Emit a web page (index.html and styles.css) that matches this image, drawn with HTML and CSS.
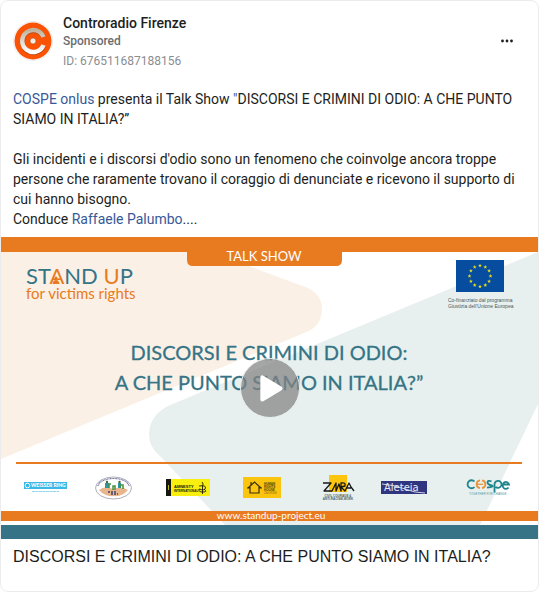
FILE: index.html
```html
<!DOCTYPE html>
<html lang="it">
<head>
<meta charset="utf-8">
<meta name="viewport" content="width=device-width, initial-scale=1">
<title>Controradio Firenze</title>
<link rel="stylesheet" href="styles.css">
</head>
<body>
<article class="card">
  <header class="head">
    <svg class="avatar" viewBox="0 0 40 40" aria-hidden="true">
      <defs>
        <linearGradient id="silver" x1="0" y1="0" x2="0" y2="1">
          <stop offset="0" stop-color="#c0b29c"/>
          <stop offset="1" stop-color="#fff"/>
        </linearGradient>
      </defs>
      <circle cx="20" cy="20" r="19.5" fill="#fff" stroke="#ececec"/>
      <circle cx="20" cy="20" r="18.5" fill="#fb5304"/>
      <path d="M30.500 16A11 11 0 1 0 30.500 25" fill="none" stroke="#b5430a" stroke-width="5"/>
      <path d="M30.500 16A11 11 0 1 0 30.500 24" fill="none" stroke="url(#silver)" stroke-width="4.500"/>
      <circle cx="20" cy="20" r="5" fill="#fb5304"/>
      <circle cx="20" cy="20" r="3" fill="#f3ece5" stroke="#b8480f" stroke-width=".6"/>
    </svg>
    <div class="who">
      <h1 class="name">Controradio Firenze</h1>
      <p class="sponsored">Sponsored</p>
      <p class="ident">ID: 676511687188156</p>
    </div>
    <button class="more" type="button" aria-label="More options">
      <svg class="dots" viewBox="0 0 14 4" aria-hidden="true">
        <circle cx="2.5" cy="2" r="1.4"/><circle cx="7" cy="2" r="1.4"/><circle cx="11.500" cy="2" r="1.4"/>
      </svg>
    </button>
  </header>

  <div class="copy">
    <p><a href="#">COSPE onlus</a> presenta il Talk Show <a href="#">"</a>DISCORSI E CRIMINI DI ODIO: A CHE PUNTO SIAMO IN ITALIA?”</p>
    <p class="para">Gli incidenti e i discorsi d'odio sono un fenomeno che coinvolge ancora troppe persone che raramente trovano il coraggio di denunciate e ricevono il supporto di cui hanno bisogno.<br>Conduce <a href="#">Raffaele Palumbo</a>....</p>
  </div>

  <div class="media">
    <svg class="poster" viewBox="1 237 537 302" role="img" aria-label="Talk show">
      <rect x="1" y="237" width="537" height="302" fill="#fff"/>
      <path d="M1 250H206L308 288Q322 295 322 309Q322 324 309 331L1 459Z" fill="#fbf0e6"/>
      <path d="M538 252L168 406Q149 416 149 435Q149 447 160 456L225 525H480L538 404Z" fill="#e7f0ee"/>

      <path d="M1 237H538V252H342V260Q342 266 336 266H193Q187 266 187 260V252H1Z" fill="#e87b20"/>
      <text class="round" x="264" y="261" font-size="13" text-anchor="middle" fill="#fff">TALK SHOW</text>

      <text class="round" x="26" y="284" font-size="22" fill="#357486">ST<tspan fill="#e87b20">A</tspan>ND <tspan fill="#e87b20">U</tspan>P</text>
      <circle cx="56" cy="278" r="1.500" fill="#e87b20"/>
      <path d="M52.500 284Q53 280 56 280T59.500 284Z" fill="#e87b20"/>
      <text class="round" x="26" y="299" font-size="15" fill="#e87b20">for victims rights</text>

      <defs><path id="star" d="M0-2L.5-.6 2-.6.8.3 1.200 1.700 0 .8-1.200 1.700-.8.3-2-.6-.5-.6Z"/></defs>
      <rect x="456" y="260" width="48" height="32" fill="#064da0"/>
      <g fill="#f5e61c">
        <use href="#star" x="480" y="265.500"/><use href="#star" x="485.300" y="267"/>
        <use href="#star" x="489.100" y="270.800"/><use href="#star" x="490.500" y="276"/>
        <use href="#star" x="489.100" y="281.300"/><use href="#star" x="485.300" y="285.100"/>
        <use href="#star" x="480" y="286.500"/><use href="#star" x="474.700" y="285.100"/>
        <use href="#star" x="470.900" y="281.300"/><use href="#star" x="469.500" y="276"/>
        <use href="#star" x="470.900" y="270.800"/><use href="#star" x="474.700" y="267"/>
      </g>
      <text class="plain" x="448" y="302" font-size="5" fill="#4b5a5c">Co-finanziato dal programma</text>
      <text class="plain" x="448" y="308" font-size="5" fill="#4b5a5c">Giustizia dell'Unione Europea</text>

      <g class="round" fill="#357486" stroke="#357486" stroke-width=".3" text-anchor="middle">
        <text x="269" y="360" font-size="20">DISCORSI E CRIMINI DI ODIO:</text>
        <text x="269" y="390" font-size="20">A CHE PUNTO SIAMO IN ITALIA?”</text>
      </g>

      <rect x="16" y="462" width="506" height="2" fill="#e87b20"/>

      <rect x="24" y="482" width="43" height="7" fill="#3cb8e8"/>
      <circle cx="27.500" cy="485.500" r="2.300" fill="none" stroke="#fff"/>
      <text class="round" x="31" y="487" font-size="5" font-weight="900" fill="#fff">WEISSER RING</text>
      <path d="M32 491.500H59" stroke="#8ed4ef" stroke-dasharray="3 .5"/>

      <ellipse cx="113.500" cy="488" rx="18" ry="11" fill="#fff" stroke="#aeb0b9"/>
      <path d="M98 486C100 476 127 476 129 486" fill="none" stroke="#6c6d9d" stroke-width="1.200" stroke-dasharray="1 .5"/>
      <path d="M99 490Q105 485 113 489Q122 486 128 490Q122 497 114 496Q105 497 99 490Z" fill="#e9b58d"/>
      <path d="M105 488V483H109V488ZM118 488V483H121V488Z" fill="#2f96a7"/>
      <path d="M109 488V484H111M113 490V486H115V490M120 488V485H123V489" fill="none" stroke="#46903e" stroke-width="1.500"/>
      <circle cx="107" cy="482" r="1.200" fill="#4c633b"/><circle cx="119.500" cy="482" r="1.200" fill="#4c633b"/>
      <path d="M108 492H117M111 494H118" stroke="#3d426f" stroke-width="1.500" stroke-dasharray="2 1"/>

      <rect x="166" y="479" width="44" height="17" fill="#f8ef10"/>
      <rect x="166" y="479" width="5" height="17" fill="#171711"/>
      <path d="M168.500 485V490" stroke="#bbb41c"/>
      <text class="plain" x="174" y="488" font-size="4" font-weight="700" fill="#1c1b0c">AMNESTY</text>
      <text class="plain" x="174" y="492" font-size="3" font-weight="700" fill="#1c1b0c">INTERNATIONAL</text>
      <path d="M202 482Q204 484 202.500 486V494M199 486Q206 485 205.500 488T199 489Q198 492 203 492T204 489" fill="none" stroke="#1c1b0c" stroke-width=".9"/>

      <rect x="243" y="477" width="38" height="21" fill="#fac40f"/>
      <path d="M248 488L254.500 482 261 488M250 487V493H259V487M251 485V482M247 488H250M259 488H262" fill="none" stroke="#3c3108" stroke-width="1.200"/>
      <g class="plain" font-size="3" font-weight="700" fill="#4e3f0c">
        <text x="264" y="485">HUMAN</text><text x="264" y="488">RIGHTS</text><text x="264" y="491">HOUSE</text>
        <text x="264" y="494" fill="#b48b14">ZAGREB</text>
      </g>

      <rect x="329" y="475" width="18" height="17" fill="#fdc50d"/>
      <path d="M323 483H331L324 491H332L336 483V491L339 484 341 491V483Q346 482 345 486L341 487 345 491 349 483 351 487 354 491M347 488H351" fill="none" stroke="#171717" stroke-width="1.300" stroke-linejoin="round"/>
      <g class="plain" font-size="3" font-weight="700" fill="#535a58" text-anchor="middle">
        <text x="338" y="497">CIVIL COURAGE &amp;</text><text x="338" y="500">ANTI-RACISM-WORK</text>
      </g>

      <rect x="381" y="481" width="46" height="13" fill="#303580"/>
      <text class="tech" x="384" y="491" font-size="10" fill="#e8eaf3">Aleteia</text>
      <path d="M382 484Q395 485 405 489T425 493" fill="none" stroke="#dfe3ee" stroke-width=".9"/>

      <g fill="none" stroke="#20858c" stroke-width="1.800">
        <path d="M474.500 481.500A4 4 0 1 0 474.500 487"/>
        <path d="M482 480.300A4 4 0 0 1 482 488.200" stroke="#e8943d"/>
        <path d="M480 480.300A4 4 0 0 0 480 488.200" stroke="#e8943d"/>
        <path d="M476 484.300H483" stroke="#e8943d" stroke-width="1.300"/>
        <path d="M491.500 481.300Q487.500 480 487.500 482.300T491.500 485.500T487 487.700"/>
        <path d="M494.500 492.500V484.300A3.500 3.500 0 1 1 495.500 486.800"/>
        <path d="M503.500 484.500H509A3.200 3.500 0 1 0 508.500 487.500"/>
      </g>
      <text class="plain" x="469" y="495" font-size="3" fill="#4f9da1">TOGETHER FOR CHANGE</text>

      <rect x="1" y="511" width="537" height="10" fill="#e87b20"/>
      <text class="round" x="271" y="519" font-size="10" text-anchor="middle" fill="#fff">www.standup-project.eu</text>
      <rect x="1" y="525" width="537" height="14" fill="#367386"/>
    </svg>
    <button class="play" type="button" aria-label="Play video">
      <svg class="play-icon" viewBox="0 0 60 60" aria-hidden="true">
        <path d="M22 19V42L41 30.500Z" fill="#fff" stroke="#fff" stroke-width="4" stroke-linejoin="round"/>
      </svg>
    </button>
  </div>

  <h2 class="title">DISCORSI E CRIMINI DI ODIO: A CHE PUNTO SIAMO IN ITALIA?</h2>
</article>
</body>
</html>
```
FILE: styles.css
```css
* {
  box-sizing: border-box;
}

body {
  margin: 0;
  background: #fff;
  color: #1c1e21;
  font-family: Roboto, "Liberation Sans", sans-serif;
}

h1, h2, p {
  margin: 0;
}

a {
  color: #385898;
  text-decoration: none;
}

button {
  padding: 0;
  border: 0;
  background: none;
  cursor: pointer;
}

.card {
  border: 1px solid #ececee;
  border-radius: 8px;
  overflow: hidden;
  padding-bottom: 24px;
}

.head {
  display: flex;
  align-items: flex-start;
  gap: 10px;
  padding: 12px 24px 0 12px;
}

.avatar {
  width: 40px;
  height: 40px;
  margin-top: 8px;
}

.who {
  flex: 1;
}

.name {
  font-size: 14px;
  font-weight: 500;
  line-height: 20px;
}

.sponsored {
  color: #6b6d70;
  font-size: 12px;
  font-weight: 500;
  line-height: 16px;
}

.ident {
  color: #8a8d91;
  font-size: 12px;
  line-height: 24px;
}

.more {
  display: flex;
  align-items: center;
  height: 24px;
  margin-top: 16px;
}

.dots {
  width: 14px;
  height: 4px;
  fill: #1c1e21;
}

.copy {
  padding: 16px 12px 8px;
  font-size: 14px;
  line-height: 20px;
}

.para {
  margin-top: 20px;
}

.media {
  position: relative;
}

.poster {
  display: block;
  width: 100%;
  height: auto;
}

.round {
  font-family: Lato, "Open Sans", sans-serif;
}

.plain {
  font-family: "Liberation Sans", sans-serif;
}

.tech {
  font-family: "DejaVu Sans", sans-serif;
}

.play {
  position: absolute;
  inset: 0;
  margin: auto;
  width: 60px;
  height: 60px;
  border: 1px solid #e9eeee;
  border-radius: 50%;
  background: rgba(130, 130, 130, 0.72);
}

.play-icon {
  display: block;
  width: 100%;
}

.title {
  padding: 8px 12px 0;
  font-family: "Liberation Sans", Arial, sans-serif;
  font-size: 16px;
  font-weight: 400;
  line-height: 20px;
}
```
